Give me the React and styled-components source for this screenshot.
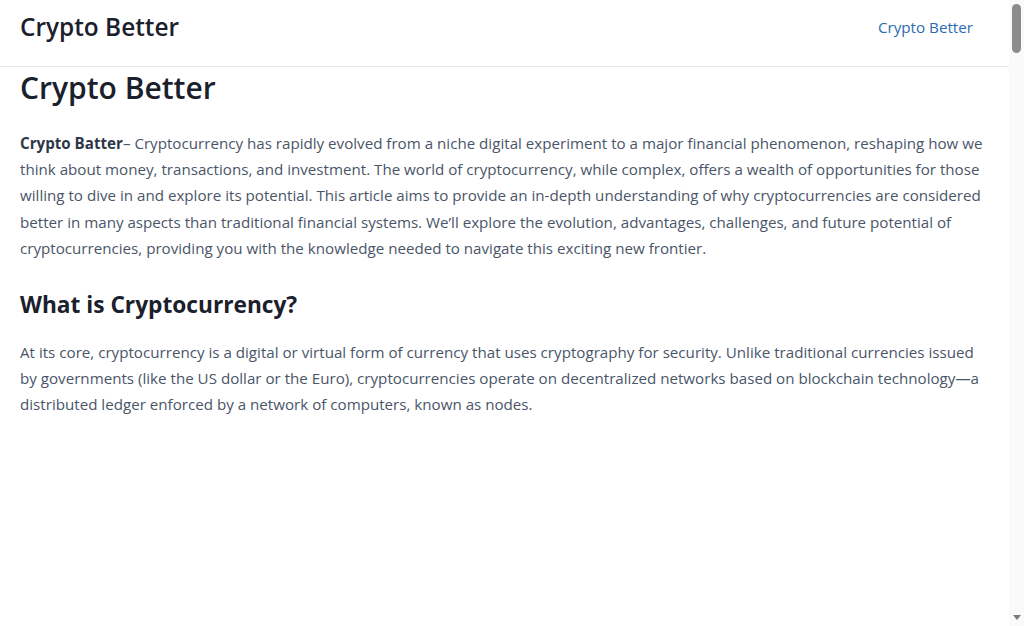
import styled, { createGlobalStyle } from "styled-components"

const GlobalStyle = createGlobalStyle`
  html, body {
    margin: 0;
    padding: 0;
    height: 100%;
    overflow: hidden;
    background: #ffffff;
  }
  body {
    font-family: "Open Sans", "Noto Sans", sans-serif;
    color: #4a5568;
  }
`

const Page = styled.div`
  display: flex;
  height: 100vh;
`

const Content = styled.div`
  flex: 1;
  min-width: 0;
  overflow: hidden;
`

// stand-in for the browser's vertical scrollbar seen in the screenshot
const ScrollRail = styled.div`
  width: 15px;
  flex-shrink: 0;
  display: flex;
  flex-direction: column;
  align-items: center;
  justify-content: space-between;
  padding: 4px 0 6px;
  box-sizing: border-box;
  background: #fafafa;
`

const Thumb = styled.div`
  width: 9px;
  height: 49px;
  border-radius: 5px;
  background: #8b8b8b;
`

const Arrow = styled.div`
  width: 0;
  height: 0;
  border-left: 4px solid transparent;
  border-right: 4px solid transparent;
  border-top: 5px solid #7a7a7a;
`

const Header = styled.header`
  height: 66px;
  display: flex;
  align-items: center;
  justify-content: space-between;
  padding: 0 36px 0 20px;
  border-bottom: 1px solid #e5e7eb;
  background: #ffffff;
`

const Brand = styled.div`
  font-size: 24.4px;
  font-weight: 600;
  color: #1a202c;
  margin-top: -14px;
`

const Nav = styled.nav`
  display: flex;
  gap: 24px;
  margin-top: -13px;
`

const NavLink = styled.a`
  font-size: 15.2px;
  color: #2b6cb0;
  text-decoration: none;
`

const Main = styled.main`
  padding: 0 20px;
`

const Title = styled.h1`
  margin: 3px 0 24px;
  font-size: 30px;
  font-weight: 600;
  line-height: 1.2;
  color: #1a202c;
`

const Heading = styled.h2`
  margin: 29px 0 19px;
  font-size: 22.7px;
  font-weight: 700;
  line-height: 1.3;
  color: #1a202c;
`

const Paragraph = styled.p`
  margin: 0;
  font-size: 15.15px;
  line-height: 26.2px;
  color: #4a5568;
`

const Strong = styled.strong`
  font-weight: 700;
  color: #2d3748;
`

export default function App() {
  return (
    <Page>
      <GlobalStyle />
      <Content>
        <Header>
          <Brand>Crypto Better</Brand>
          <Nav>
            <NavLink href="#">Crypto Better</NavLink>
          </Nav>
        </Header>
        <Main>
          <Title>Crypto Better</Title>
          <Paragraph>
            <Strong>Crypto Batter</Strong>– Cryptocurrency has rapidly evolved from a niche digital
            experiment to a major financial phenomenon, reshaping how we think about money,
            transactions, and investment. The world of cryptocurrency, while complex, offers a
            wealth of opportunities for those willing to dive in and explore its potential. This
            article aims to provide an in-depth understanding of why cryptocurrencies are considered
            better in many aspects than traditional financial systems. We’ll explore the evolution,
            advantages, challenges, and future potential of cryptocurrencies, providing you with the
            knowledge needed to navigate this exciting new frontier.
          </Paragraph>
          <Heading>What is Cryptocurrency?</Heading>
          <Paragraph>
            At its core, cryptocurrency is a digital or virtual form of currency that uses
            cryptography for security. Unlike traditional currencies issued by governments (like the
            US dollar or the Euro), cryptocurrencies operate on decentralized networks based on
            blockchain technology—a distributed ledger enforced by a network of computers, known as
            nodes.
          </Paragraph>
        </Main>
      </Content>
      <ScrollRail>
        <Thumb />
        <Arrow />
      </ScrollRail>
    </Page>
  )
}
